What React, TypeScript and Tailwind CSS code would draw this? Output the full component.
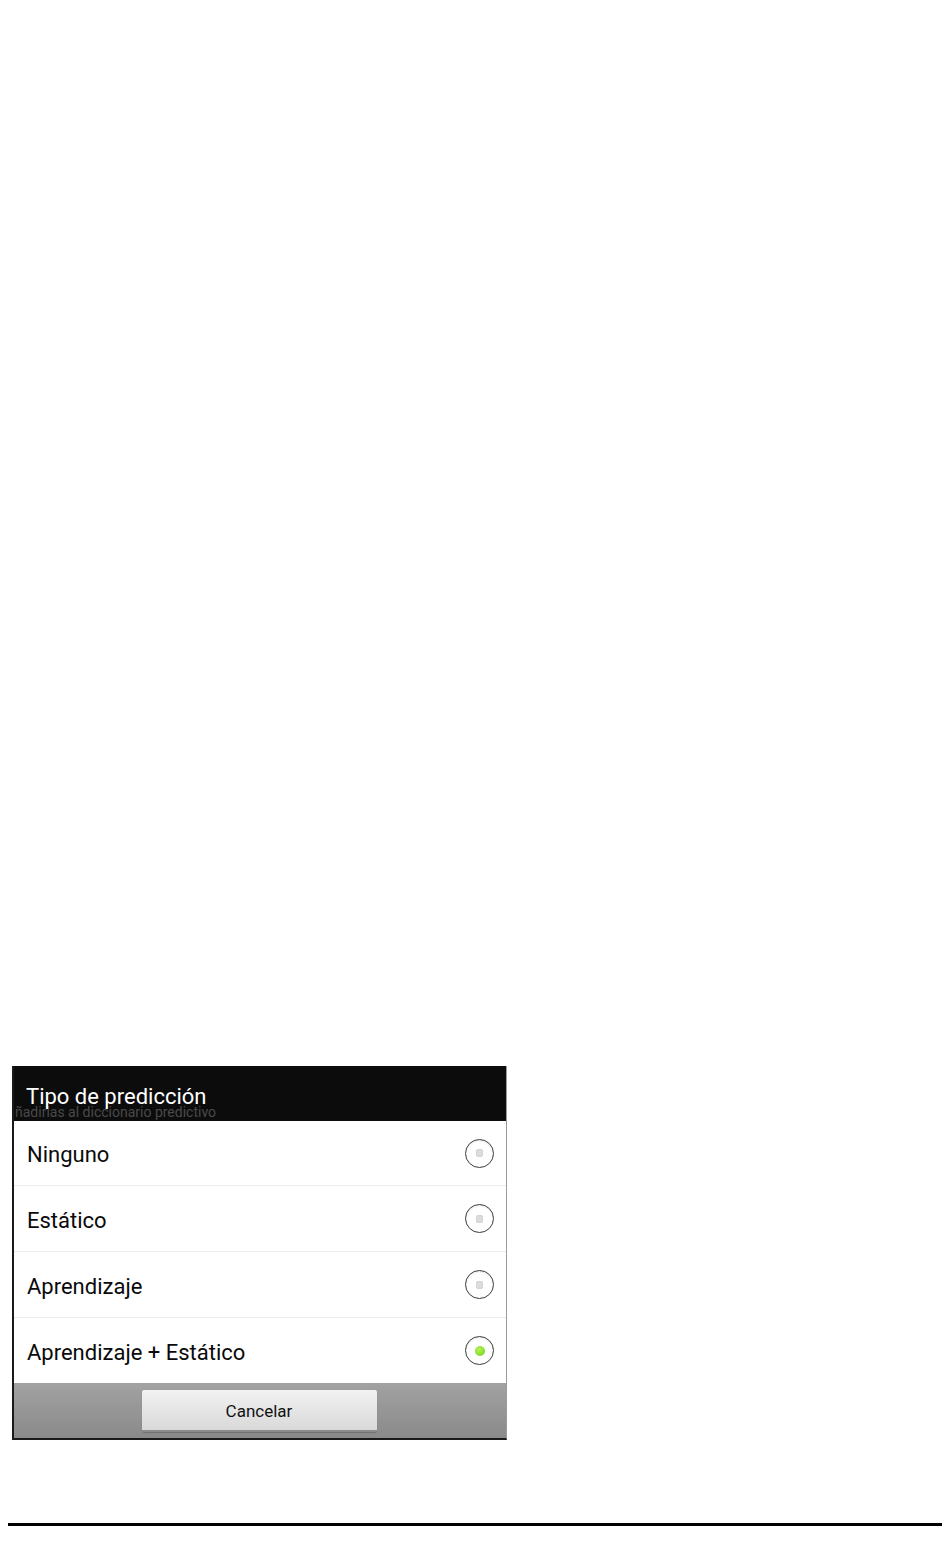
const options = [
  { label: "Ninguno", h: "h-[65px]", selected: false },
  { label: "Estático", h: "h-[66px]", selected: false },
  { label: "Aprendizaje", h: "h-[66px]", selected: false },
  { label: "Aprendizaje + Estático", h: "h-[65px]", selected: true },
];

function Radio({ selected }: { selected: boolean }) {
  return (
    <div className="flex h-[29px] w-[29px] items-center justify-center rounded-full border-[1.5px] border-[#3c3c3c] bg-white shadow-[inset_0_1px_2px_rgba(0,0,0,0.1)]">
      {selected ? (
        <div className="h-[10px] w-[10px] rounded-full bg-[radial-gradient(circle_at_40%_35%,#b6f25a,#6fcf10)]" />
      ) : (
        <div className="h-[8px] w-[7px] rounded-[3px] bg-[#dcdcdc] shadow-[inset_0_0_1px_rgba(0,0,0,0.3)]" />
      )}
    </div>
  );
}

export default function App() {
  return (
    <div className="relative h-[1568px] w-[950px] bg-white font-['Roboto','Liberation_Sans',sans-serif]">
      <div className="flex flex-col pt-[1066px] pl-[12px]">
        <div className="w-[495px] border-l-2 border-r border-b-2 border-l-[#1a1a1a] border-r-[#9a9a9a] border-b-[#1a1a1a]">
          {/* Title bar */}
          <div className="relative h-[55px] overflow-hidden bg-[#0c0c0c]">
            <span className="absolute left-[1px] top-[39px] text-[14px] leading-none text-[#4a4a4a]">
              ñadirlas al diccionario predictivo
            </span>
            <span className="absolute left-[12px] top-[20px] text-[22px] leading-none text-white">
              Tipo de predicción
            </span>
          </div>

          {/* Options */}
          <div className="bg-white">
            {options.map((o, i) => (
              <div
                key={o.label}
                className={`flex ${o.h} items-center justify-between pl-[13px] pr-[12px] ${
                  i < options.length - 1 ? "border-b border-[#ededed]" : ""
                }`}
              >
                <span className="pt-[3px] text-[22px] text-[#0a0a0a]">{o.label}</span>
                <Radio selected={o.selected} />
              </div>
            ))}
          </div>

          {/* Button bar */}
          <div className="flex h-[55px] items-center justify-center bg-gradient-to-b from-[#a2a2a2] to-[#8a8a8a] pr-[2px]">
            <button className="h-[42px] w-[235px] rounded-[2px] border-b-2 border-[#8c8c8c] bg-gradient-to-b from-[#f2f2f2] to-[#d9d9d9] pt-[4px] text-[17px] text-[#111] shadow-[0_1px_1px_rgba(0,0,0,0.2)]">
              Cancelar
            </button>
          </div>
        </div>

        <div className="mt-[83px] ml-[-4px] h-[3px] w-[934px] bg-black" />
      </div>
    </div>
  );
}
